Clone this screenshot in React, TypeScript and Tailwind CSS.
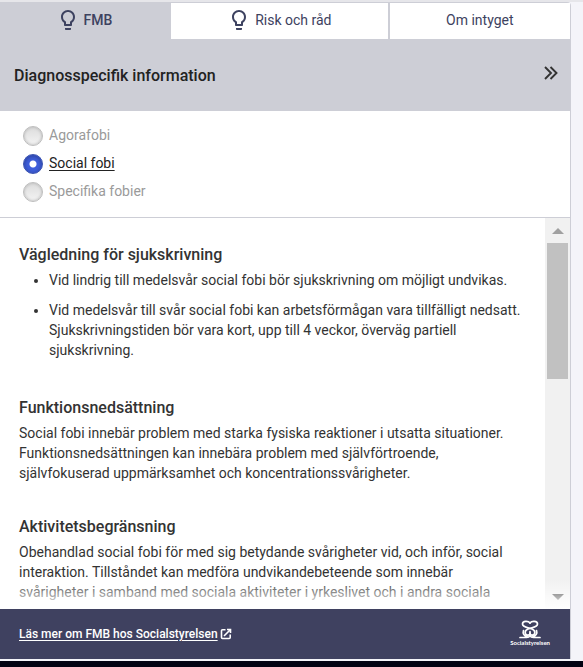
import { useRef, useState } from 'react';
import { MdLightbulbOutline } from 'react-icons/md';

const DIAGNOSES = ['Agorafobi', 'Social fobi', 'Specifika fobier'];

function Tabs() {
  return (
    <div role="tablist" className="flex h-9 text-sm text-[#3d4260]">
      <button
        role="tab"
        aria-selected="true"
        className="flex w-[30%] items-center justify-center gap-1 bg-[#cdced6] pr-[3px] pb-[2px] font-medium"
      >
        <MdLightbulbOutline className="size-6" />
        FMB
      </button>
      <button
        role="tab"
        aria-selected="false"
        className="flex flex-1 items-center justify-center gap-1 bg-white pb-[2px]"
      >
        <MdLightbulbOutline className="size-6" />
        Risk och råd
      </button>
      <button
        role="tab"
        aria-selected="false"
        className="w-[32%] border-l-2 border-[#cdced6] bg-white pb-[2px]"
      >
        Om intyget
      </button>
    </div>
  );
}

function DiagnosisPicker() {
  const [selected, setSelected] = useState('Social fobi');

  return (
    <fieldset className="border-b border-[#cdced6] px-[23px] py-[11px] text-sm">
      {DIAGNOSES.map((name) => (
        <label
          key={name}
          className="flex h-7 w-fit items-center gap-[6px] text-[#9a9a9a] has-checked:text-[#222] has-checked:underline has-checked:underline-offset-2"
        >
          <input
            type="radio"
            name="diagnosis"
            checked={selected === name}
            onChange={() => setSelected(name)}
            className="size-5 appearance-none rounded-full border border-[#bdbdbd] bg-linear-to-b from-[#dcdcdc] to-[#f4f4f4] shadow-[inset_0_0_3px_#b0b0b0] checked:border-[#3a52ae] checked:bg-[radial-gradient(circle,#fff_3px,#3f5fdc_4px)] checked:shadow-[inset_0_1px_4px_#2b3f94]"
          />
          <span className="pb-[2px]">{name}</span>
        </label>
      ))}
    </fieldset>
  );
}

function ExternalIcon() {
  return (
    <svg viewBox="0 0 12 12" className="size-3" fill="none" stroke="currentColor" strokeWidth="1.6">
      <path d="M5.500 1.800H2.500Q1.500 1.800 1.500 2.800V9.500Q1.500 10.500 2.500 10.500H9.200Q10.200 10.500 10.200 9.500V6.500" />
      <path d="M4 8L10 2M7 1.500H10.500V5" />
    </svg>
  );
}

function SocialstyrelsenLogo() {
  return (
    <div className="flex flex-col items-center pb-px text-white">
      <svg
        viewBox="0 0 22 19"
        className="h-[19px] w-[22px]"
        fill="none"
        stroke="currentColor"
        strokeWidth="1.7"
        strokeLinecap="round"
      >
        <path d="M11 3C9.500 0.800 3.500 0.500 3.500 4C3.500 7.500 9 7.300 13 9C17.500 11 16 15.200 13 15.200C11.500 15.200 11 14.500 11 13" />
        <path d="M11 3C12.500 0.800 18.500 0.500 18.500 4C18.500 7.500 13 7.300 9 9C4.500 11 6 15.200 9 15.200C10.500 15.200 11 14.500 11 13V11.500" />
        <path d="M4.500 10.500C3.500 13.500 5 16 8 16.500M1 17.500H7.500C9 17.500 10.500 16.800 11 15.500" />
        <path d="M17.500 10.500C18.500 13.500 17 16 14 16.500M21 17.500H14.500C13 17.500 11.500 16.800 11 15.500" />
      </svg>
      <span className="font-[Lato,sans-serif] text-[6px] leading-[8px] font-bold">
        Socialstyrelsen
      </span>
    </div>
  );
}

export default function App() {
  const scrollRef = useRef<HTMLDivElement>(null);

  const scrollBy = (top: number) => {
    scrollRef.current?.scrollBy({ top, behavior: 'smooth' });
  };

  return (
    <div className="flex h-screen flex-col border-t-2 border-b-6 border-t-[#e6e6ea] border-b-[#020212] bg-[#f4f4f9] pr-3 font-[Roboto,sans-serif] text-[#333]">
      <div className="mb-[2px] flex min-h-0 flex-1 flex-col rounded-tr-sm border-t border-r border-[#cdced6] bg-white">
        <Tabs />
        <header className="flex h-[72px] items-center justify-between bg-[#cdced6] pr-3 pl-[14px]">
          <h1 className="pt-px text-base font-medium text-[#222]">Diagnosspecifik information</h1>
          <button aria-label="Dölj panelen" className="pb-1 text-[#333]">
            <svg
              viewBox="0 0 14 14"
              className="size-[14px]"
              fill="none"
              stroke="currentColor"
              strokeWidth="1.9"
            >
              <path d="M1 1L7 7L1 13M6.500 1L12.500 7L6.500 13" />
            </svg>
          </button>
        </header>
        <DiagnosisPicker />

        <div className="relative flex min-h-0 flex-1">
          <div
            ref={scrollRef}
            className="flex-1 overflow-y-auto pt-[27px] pr-5 pl-[19px] text-sm leading-5 [scrollbar-width:none]"
          >
            <section className="mb-[34px]">
              <h2 className="mb-[5px] text-base leading-5 font-medium">
                Vägledning för sjukskrivning
              </h2>
              <ul className="list-disc space-y-[10px] pb-1 pl-[30px]">
                <li>Vid lindrig till medelsvår social fobi bör sjukskrivning om möjligt undvikas.</li>
                <li>
                  Vid medelsvår till svår social fobi kan arbetsförmågan vara tillfälligt nedsatt.
                  Sjukskrivningstiden bör vara kort, upp till 4 veckor, överväg partiell
                  sjukskrivning.
                </li>
              </ul>
            </section>
            <section className="mb-[34px]">
              <h2 className="mb-[5px] text-base leading-5 font-medium">Funktionsnedsättning</h2>
              <p>
                Social fobi innebär problem med starka fysiska reaktioner i utsatta situationer.
                Funktionsnedsättningen kan innebära problem med självförtroende, självfokuserad
                uppmärksamhet och koncentrationssvårigheter.
              </p>
            </section>
            <section>
              <h2 className="mb-[5px] text-base leading-5 font-medium">Aktivitetsbegränsning</h2>
              <p>
                Obehandlad social fobi för med sig betydande svårigheter vid, och inför, social
                interaktion. Tillståndet kan medföra undvikandebeteende som innebär svårigheter i
                samband med sociala aktiviteter i yrkeslivet och i andra sociala
              </p>
            </section>
          </div>

          <div className="flex w-[25px] flex-col items-center bg-[#f1f1f1]">
            <button
              aria-label="Rulla upp"
              onClick={() => scrollBy(-40)}
              className="flex h-[25px] w-full items-center justify-center"
            >
              <svg viewBox="0 0 12 6" className="h-[6px] w-3 fill-[#a0a0a0]">
                <path d="M0 6L6 0L12 6Z" />
              </svg>
            </button>
            <div className="flex w-full flex-1 flex-col px-[2px]">
              <div className="h-2/5 bg-[#c1c1c1]" />
            </div>
            <button
              aria-label="Rulla ner"
              onClick={() => scrollBy(40)}
              className="flex h-[25px] w-full items-center justify-center"
            >
              <svg viewBox="0 0 12 6" className="h-[6px] w-3 fill-[#383838]">
                <path d="M0 0L6 6L12 0Z" />
              </svg>
            </button>
          </div>
          <div className="pointer-events-none absolute inset-x-0 bottom-0 h-[30px] bg-linear-to-t from-white to-white/0" />
        </div>

        <footer className="flex h-[50px] items-center justify-between bg-[#3f4160] pr-5 pl-[19px]">
          <a href="#fmb" className="flex items-center gap-[2px] text-xs font-medium text-white">
            <span className="underline underline-offset-2">Läs mer om FMB hos Socialstyrelsen</span>
            <ExternalIcon />
          </a>
          <SocialstyrelsenLogo />
        </footer>
      </div>
    </div>
  );
}
